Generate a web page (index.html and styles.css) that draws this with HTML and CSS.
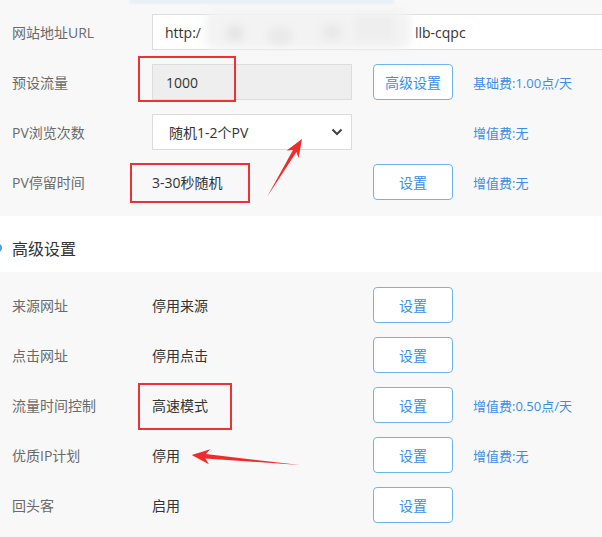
FILE: index.html
```html
<!DOCTYPE html>
<html lang="zh-CN">
    <head>
        <meta charset="utf-8">
        <title>流量设置</title>
        <link rel="stylesheet" href="styles.css">
    </head>
    <body>
        <div class="panel basic">
            <div class="tab-glow"></div>
            <div class="row">
                <span class="label">网站地址URL</span>
                <div class="input input-url">
                    <span>http:/</span>
                    <span class="masked"></span>
                    <span>llb-cqpc</span>
                </div>
            </div>
            <div class="row">
                <span class="label">预设流量</span>
                <div class="input input-disabled">1000</div>
                <button class="btn">高级设置</button>
                <span class="note">基础费:1.00点/天</span>
            </div>
            <div class="row">
                <span class="label">PV浏览次数</span>
                <div class="input select">
                    <span>随机1-2个PV</span>
                    <svg class="chevron" width="12" height="8" viewBox="0 0 12 8"><path d="M1.5 1.5 L6 6 L10.5 1.5" fill="none" stroke="#444" stroke-width="2"/></svg>
                </div>
                <span></span>
                <span class="note">增值费:无</span>
            </div>
            <div class="row">
                <span class="label">PV停留时间</span>
                <span class="value">3-30秒随机</span>
                <button class="btn">设置</button>
                <span class="note">增值费:无</span>
            </div>
        </div>

        <div class="section-title">
            <span class="dot"></span>
            <span>高级设置</span>
        </div>

        <div class="panel advanced">
            <div class="row">
                <span class="label">来源网址</span>
                <span class="value">停用来源</span>
                <button class="btn">设置</button>
            </div>
            <div class="row">
                <span class="label">点击网址</span>
                <span class="value">停用点击</span>
                <button class="btn">设置</button>
            </div>
            <div class="row">
                <span class="label">流量时间控制</span>
                <span class="value">高速模式</span>
                <button class="btn">设置</button>
                <span class="note">增值费:0.50点/天</span>
            </div>
            <div class="row">
                <span class="label">优质IP计划</span>
                <span class="value">停用</span>
                <button class="btn">设置</button>
                <span class="note">增值费:无</span>
            </div>
            <div class="row">
                <span class="label">回头客</span>
                <span class="value">启用</span>
                <button class="btn">设置</button>
            </div>
        </div>

        <!-- red annotation marks drawn over the screenshot -->
        <svg class="marks" width="602" height="537" viewBox="0 0 602 537">
            <g fill="none" stroke="#ec3236" stroke-width="2">
                <rect x="139" y="57" width="96" height="44"/>
                <rect x="131" y="164" width="118" height="38"/>
                <rect x="139" y="384" width="92" height="45"/>
            </g>
            <g fill="#f02b2b">
                <polygon points="267,197 296.4,151.9 298.6,158 302,139 286.6,150.6 293,149.9"/>
                <polygon points="300,465 205.4,458.5 208.9,464.2 191.7,455 210.3,449.2 205.8,454.1"/>
            </g>
        </svg>
    </body>
</html>
```

FILE: styles.css
```css
body{margin: 0; width: 602px; height: 537px; overflow: hidden; position: relative; background-color: #f8f8f8; color: #333; font-family: "Open Sans", "Noto Sans CJK SC", sans-serif; font-size: 14px;}
.basic{padding-bottom: 9px;}
.advanced{padding-top: 8px;}
.tab-glow{width: 264px; height: 2px; margin: 0 0 5px 130px; background-color: #e8f0f9; box-shadow: 0 1px 3px #dbe7f4;}
.row{display: grid; grid-template-columns: 140px 221px 100px 1fr; align-items: center; height: 50px; padding-left: 12px;}
.label{color: #6a6a6a;}
.value{color: #333;}
.input{box-sizing: border-box; display: flex; align-items: center; width: 200px; height: 36px; padding-left: 13px; border: 1px solid #dcdcdc; background-color: #fff; color: #333;}
.input-url{grid-column: 2 / -1; width: 470px; padding-left: 12px;}
.input-disabled{background-color: #eee;}
.select{justify-content: space-between; padding: 0 8px 0 16px;}
.masked{display: inline-block; width: 206px; height: 40px; margin: -4px 4px 0 4px; filter: blur(4px);
    background:
        linear-gradient(#e4e4e4, #e4e4e4) 22px 16px / 16px 14px no-repeat,
        linear-gradient(#e9e9e9, #e9e9e9) 64px 18px / 22px 16px no-repeat,
        linear-gradient(#e8e8e8, #e8e8e8) 118px 14px / 18px 16px no-repeat,
        linear-gradient(#eeeeee, #eeeeee) 150px 6px / 40px 26px no-repeat,
        #f3f3f3;
    border-radius: 12px;}
.btn{box-sizing: border-box; width: 80px; height: 36px; padding: 0; border: 1.5px solid #6db5ef; border-radius: 4px; background-color: #fff; color: #3a8ee6; font-family: inherit; font-size: 14px;}
.note{color: #3a8ee6; font-size: 13px;}
.section-title{box-sizing: border-box; display: flex; align-items: center; height: 56px; padding-top: 8px; background-color: #fff; color: #333; font-size: 16px;}
.dot{width: 8px; height: 8px; margin: 0 10px 0 -6px; border-radius: 50%; background-color: #4a9be8;}
.marks{position: absolute; top: 0; left: 0; pointer-events: none;}
```
